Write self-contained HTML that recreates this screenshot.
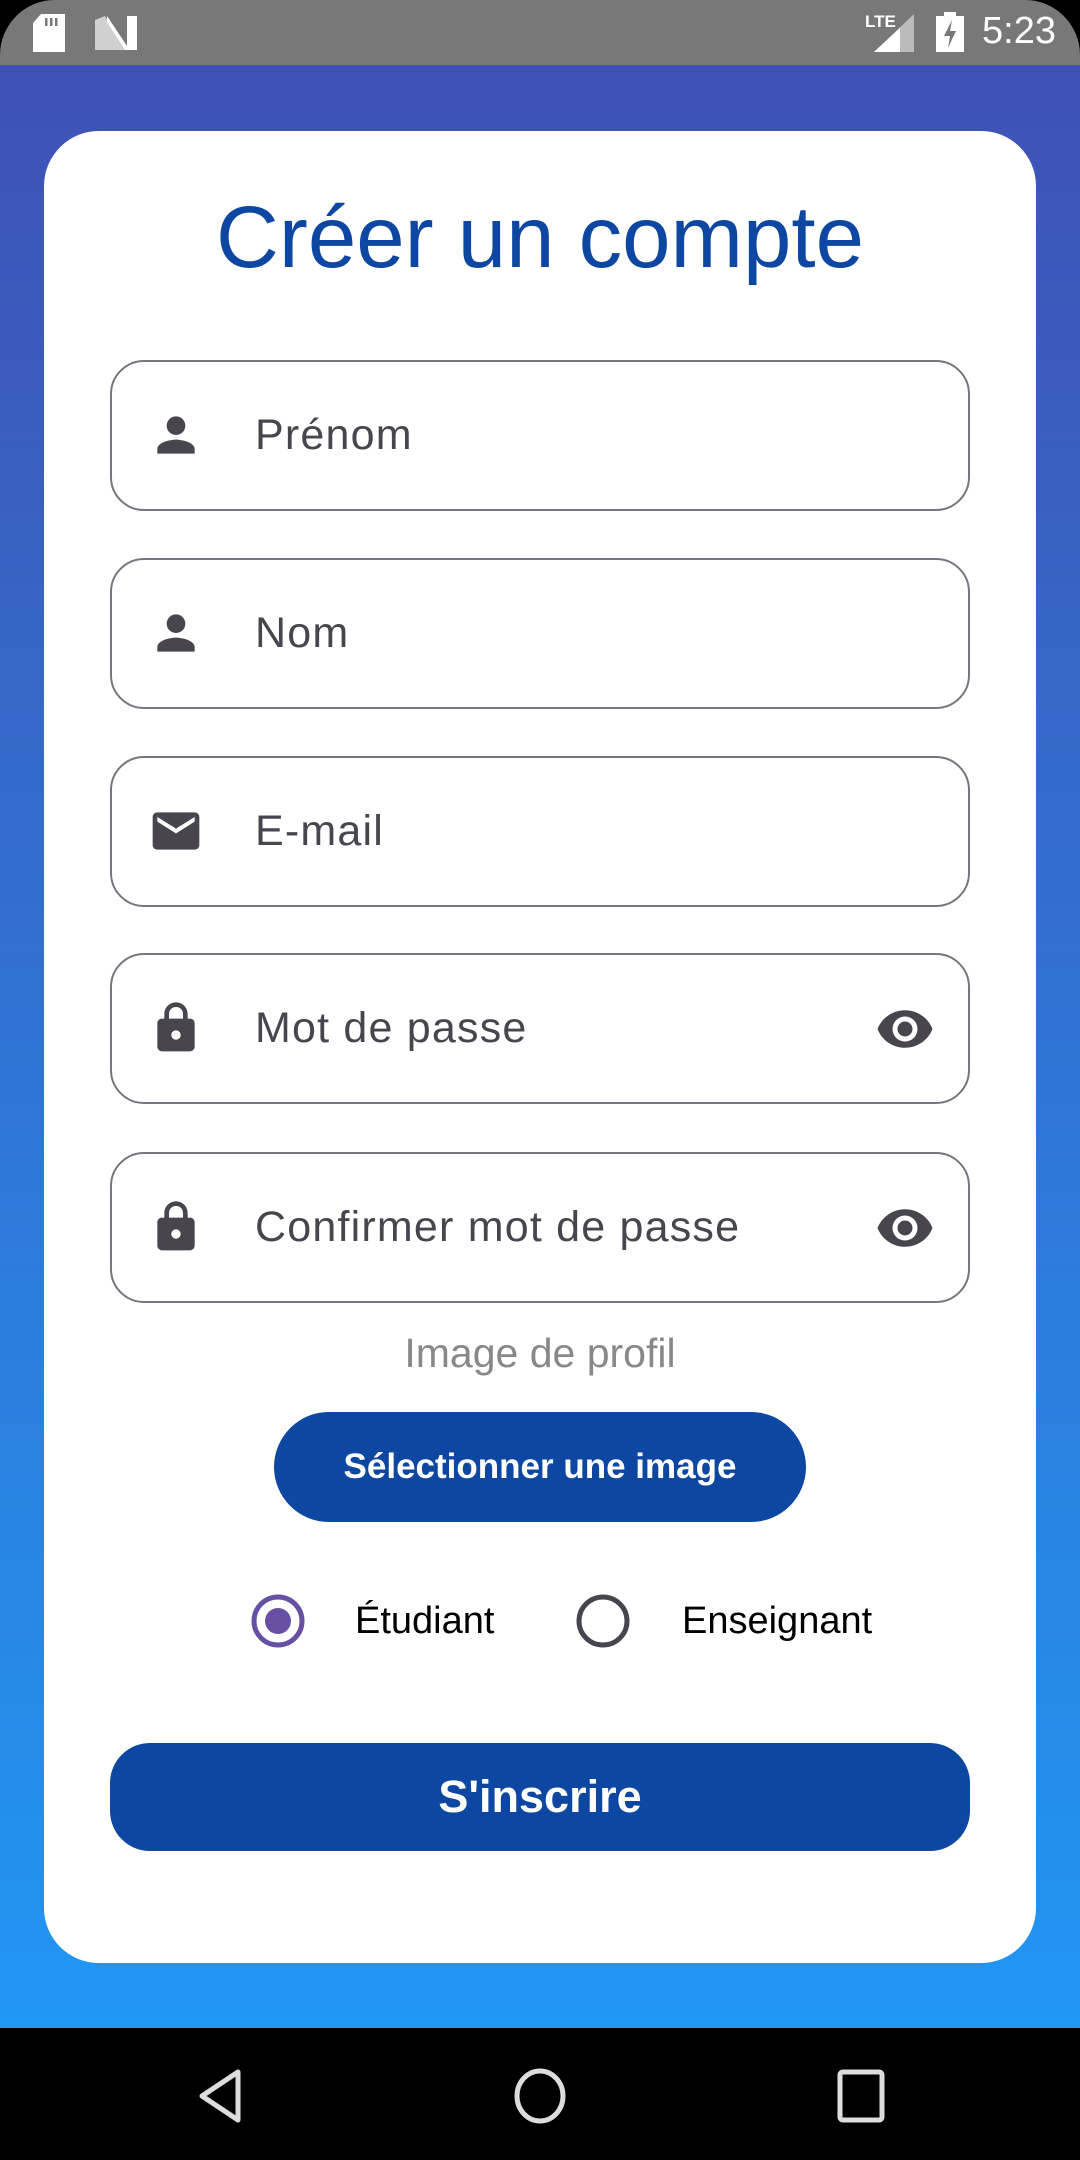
<!DOCTYPE html>
<html><head><meta charset="utf-8"><style>
*{margin:0;padding:0;box-sizing:border-box}
body{width:1080px;height:2160px;overflow:hidden;background:#000;font-family:"Liberation Sans",sans-serif;position:relative}
.screen{position:absolute;left:0;top:0;width:1080px;height:2160px;border-radius:55px;overflow:hidden;background:#000}
.status{position:absolute;left:0;top:0;width:1080px;height:65px;background:#787878}
.bg{position:absolute;left:0;top:65px;width:1080px;height:1963px;background:linear-gradient(#3F51B5,#2196F3)}
.card{position:absolute;left:44px;top:131px;width:992px;height:1832px;background:#fff;border-radius:55px}
.abs{position:absolute}
.title{position:absolute;left:0;width:1080px;top:194px;text-align:center;font-size:87px;color:#0D47A1;line-height:1}
.field{position:absolute;left:110px;width:860px;height:151px;border:2.5px solid #79747E;border-radius:34px}
.field .t{position:absolute;left:143px;top:0;line-height:146px;font-size:43px;letter-spacing:1.2px;color:#49454F}
.field svg.ic{position:absolute;left:36px;top:45px}
.field svg.eye{position:absolute;right:30px;top:44px}
.btn{position:absolute;background:#0D47A1;color:#fff;text-align:center}
.nav{position:absolute;left:0;top:2028px;width:1080px;height:132px;background:#000}
</style></head><body><div class="screen">
<div class="status">
 <svg class="abs" style="left:33px;top:14px" width="34" height="38"><path d="M8 0h24v38H0V9z" fill="#fff"/><rect x="12" y="4" width="2.5" height="8" fill="#787878"/><rect x="17" y="4" width="2.5" height="8" fill="#787878"/><rect x="22" y="4" width="2.5" height="8" fill="#787878"/></svg>
 <svg class="abs" style="left:95px;top:16px" width="42" height="34"><path d="M0 4L10 0L30 34H0z" fill="#d0d0d0"/><path d="M12 0l20 30V0h10v34H30L12 6z" fill="#fff"/></svg>
 <div class="abs" style="left:865px;top:12px;color:#fff;font-size:17px;font-weight:bold">LTE</div>
 <svg class="abs" style="left:874px;top:14px" width="40" height="38"><path d="M40 0V38H0z" fill="#bbb"/><path d="M26 14V38H0z" fill="#fff"/></svg>
 <svg class="abs" style="left:936px;top:12px" width="28" height="40"><rect x="8" y="0" width="12" height="5" fill="#fff"/><rect x="0" y="4" width="28" height="36" fill="#fff"/><path d="M16 8l-8 16h6l-2 12 8-17h-6z" fill="#787878"/></svg>
 <div class="abs" style="left:982px;top:10px;color:#fff;font-size:38px">5:23</div>
</div>
<div class="bg"></div>
<div class="card"></div>
<div class="title">Créer un compte</div>

<div class="field" style="top:360px"><svg class="ic" width="56" height="56" viewBox="0 0 24 24"><path fill="#49454F" d="M12 12a4 4 0 1 0 0-8 4 4 0 0 0 0 8zm0 2c-2.7 0-8 1.3-8 4v2h16v-2c0-2.7-5.3-4-8-4z"/></svg><div class="t">Prénom</div></div>
<div class="field" style="top:558px"><svg class="ic" width="56" height="56" viewBox="0 0 24 24"><path fill="#49454F" d="M12 12a4 4 0 1 0 0-8 4 4 0 0 0 0 8zm0 2c-2.7 0-8 1.3-8 4v2h16v-2c0-2.7-5.3-4-8-4z"/></svg><div class="t">Nom</div></div>
<div class="field" style="top:756px"><svg class="ic" width="56" height="56" viewBox="0 0 24 24"><path fill="#49454F" d="M20 4H4c-1.1 0-2 .9-2 2v12c0 1.1.9 2 2 2h16c1.1 0 2-.9 2-2V6c0-1.1-.9-2-2-2zm0 4l-8 5-8-5V6l8 5 8-5z"/></svg><div class="t">E-mail</div></div>
<div class="field" style="top:953px"><svg class="ic" width="56" height="56" viewBox="0 0 24 24"><path fill="#49454F" d="M18 8h-1V6c0-2.8-2.2-5-5-5S7 3.2 7 6v2H6c-1.1 0-2 .9-2 2v10c0 1.1.9 2 2 2h12c1.1 0 2-.9 2-2V10c0-1.1-.9-2-2-2zm-6 9c-1.1 0-2-.9-2-2s.9-2 2-2 2 .9 2 2-.9 2-2 2zM9 8V6c0-1.7 1.3-3 3-3s3 1.3 3 3v2z"/></svg><div class="t">Mot de passe</div><svg class="eye" width="66" height="60" viewBox="0 0 24 24"><path fill="#49454F" d="M12 4.5C7 4.5 2.7 7.6 1 12c1.7 4.4 6 7.5 11 7.5s9.3-3.1 11-7.5c-1.7-4.4-6-7.5-11-7.5zM12 17a5 5 0 1 1 0-10 5 5 0 0 1 0 10zm0-8a3 3 0 1 0 0 6 3 3 0 0 0 0-6z"/></svg></div>
<div class="field" style="top:1152px"><svg class="ic" width="56" height="56" viewBox="0 0 24 24"><path fill="#49454F" d="M18 8h-1V6c0-2.8-2.2-5-5-5S7 3.2 7 6v2H6c-1.1 0-2 .9-2 2v10c0 1.1.9 2 2 2h12c1.1 0 2-.9 2-2V10c0-1.1-.9-2-2-2zm-6 9c-1.1 0-2-.9-2-2s.9-2 2-2 2 .9 2 2-.9 2-2 2zM9 8V6c0-1.7 1.3-3 3-3s3 1.3 3 3v2z"/></svg><div class="t">Confirmer mot de passe</div><svg class="eye" width="66" height="60" viewBox="0 0 24 24"><path fill="#49454F" d="M12 4.5C7 4.5 2.7 7.6 1 12c1.7 4.4 6 7.5 11 7.5s9.3-3.1 11-7.5c-1.7-4.4-6-7.5-11-7.5zM12 17a5 5 0 1 1 0-10 5 5 0 0 1 0 10zm0-8a3 3 0 1 0 0 6 3 3 0 0 0 0-6z"/></svg></div>

<div class="abs" style="left:0;width:1080px;top:1330px;text-align:center;font-size:41px;color:#888">Image de profil</div>
<div class="btn" style="left:274px;top:1412px;width:532px;height:110px;border-radius:55px;line-height:110px;font-size:35px;font-weight:bold">Sélectionner une image</div>

<svg class="abs" style="left:250px;top:1593px" width="56" height="56"><circle cx="28" cy="28" r="24" fill="none" stroke="#6750A4" stroke-width="5"/><circle cx="28" cy="28" r="13" fill="#6750A4"/></svg>
<div class="abs" style="left:355px;top:1600px;font-size:38px;color:#000">Étudiant</div>
<svg class="abs" style="left:575px;top:1593px" width="56" height="56"><circle cx="28" cy="28" r="24" fill="none" stroke="#49454F" stroke-width="5"/></svg>
<div class="abs" style="left:682px;top:1600px;font-size:38px;color:#000">Enseignant</div>

<div class="btn" style="left:110px;top:1743px;width:860px;height:108px;border-radius:40px;line-height:108px;font-size:45px;font-weight:bold">S'inscrire</div>

<div class="nav">
 <svg class="abs" style="left:196px;top:40px" width="50" height="56"><path d="M42 4L6 28l36 24z" fill="none" stroke="#ddd" stroke-width="5" stroke-linejoin="round"/></svg>
 <svg class="abs" style="left:512px;top:38px" width="56" height="60"><ellipse cx="28" cy="30" rx="23" ry="25" fill="none" stroke="#ddd" stroke-width="5"/></svg>
 <svg class="abs" style="left:836px;top:40px" width="50" height="56"><rect x="4" y="4" width="42" height="48" rx="3" fill="none" stroke="#ddd" stroke-width="5"/></svg>
</div>
</div></body></html>
